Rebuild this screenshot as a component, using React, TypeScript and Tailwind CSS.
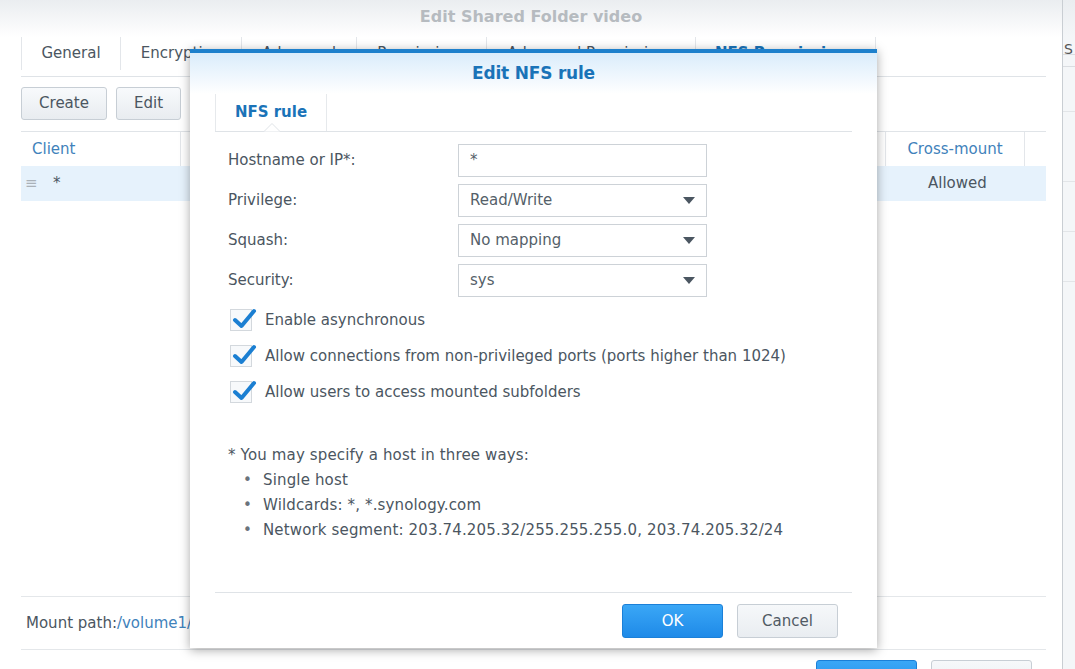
import React from "react";

const Arrow = () => (
  <svg width="12" height="7" viewBox="0 0 12 7" className="shrink-0">
    <path d="M0 0 L12 0 L6 7 Z" fill="#4b5661" />
  </svg>
);

const Check = () => (
  <div className="relative w-[22px] h-[22px] border border-[#d3d8dd] bg-[#f7f9fb] shrink-0">
    <svg width="26" height="24" viewBox="0 0 26 24" className="absolute left-[1px] top-[-3px]">
      <path d="M3 13 L9.5 19 L22 4" fill="none" stroke="#1b7fd2" strokeWidth="4" strokeLinecap="round" strokeLinejoin="round" />
    </svg>
  </div>
);

function Field({ label, value, select }: { label: string; value: string; select?: boolean }) {
  return (
    <div className="flex items-center h-[33px]">
      <div className="w-[230px] text-[#4b5661]">{label}</div>
      <div className="w-[249px] h-[33px] border border-[#cdd2d7] bg-white flex items-center justify-between pl-[11px] pr-[11px] text-[#555f69]">
        <span>{value}</span>
        {select && <Arrow />}
      </div>
    </div>
  );
}

export default function App() {
  const tabs = [
    { t: "General", w: 100 },
    { t: "Encryption", w: 121 },
    { t: "Advanced", w: 115 },
    { t: "Permissions", w: 130 },
    { t: "Advanced Permissions", w: 209 },
    { t: "NFS Permissions", w: 180, active: true },
  ];
  return (
    <div className="relative w-[1075px] h-[669px] overflow-hidden bg-white font-['DejaVu_Sans',sans-serif] text-[15px] text-[#4b5661]">
      <div className="flex h-full">
        {/* background window */}
        <div className="w-[1062px] h-full flex flex-col bg-white shrink-0">
          <div className="h-[37px] shrink-0 bg-gradient-to-b from-[#eaedf0] to-white flex items-center justify-center pb-[4px]">
            <span className="font-bold text-[16px] text-[#b6bbc0]">Edit Shared Folder video</span>
          </div>
          <div className="pl-[21px] pr-[16px] flex flex-col">
            <div className="h-[40px] border-b border-[#dfe3e7] flex items-start">
              {tabs.map((tab, i) => (
                <div
                  key={tab.t}
                  style={{ width: tab.w }}
                  className={
                    "h-[33px] flex items-center justify-center border-r border-[#e3e6ea] " +
                    (i === 0 ? "border-l " : "") +
                    (tab.active ? "font-bold text-[#1a73b8]" : "text-[#4b5661]")
                  }
                >
                  {tab.t}
                </div>
              ))}
            </div>
            <div className="mt-[10px] flex gap-[9px] h-[33px]">
              <div className="w-[86px] h-[33px] rounded-[3px] border border-[#c7ced5] bg-gradient-to-b from-[#f8fafc] to-[#e8ecf0] flex items-center justify-center">Create</div>
              <div className="w-[65px] h-[33px] rounded-[3px] border border-[#c7ced5] bg-gradient-to-b from-[#f8fafc] to-[#e8ecf0] flex items-center justify-center">Edit</div>
            </div>
            <div className="mt-[11px] border-t border-[#e0e4e8] h-[35px] flex items-center text-[#3f82bb]">
              <div className="w-[160px] pl-[11px] h-full flex items-center border-r border-[#e3e6ea]">Client</div>
              <div className="flex-1 h-full" />
              <div className="w-[140px] h-full flex items-center justify-center border-l border-r border-[#e3e6ea]">Cross-mount</div>
              <div className="w-[21px]" />
            </div>
            <div className="h-[35px] bg-[#e6f2fc] flex items-center">
              <span className="pl-[4px] w-[32px] text-[#aab1b8]">≡</span>
              <span className="text-[#4b5661]">*</span>
              <div className="flex-1" />
              <span className="w-[161px] pl-[43px] text-[#4b5661]">Allowed</span>
            </div>
            <div className="h-[395px]" />
            <div className="h-[54px] border-t border-b border-[#e4e7ea] flex items-center pl-[5px]">
              <span>Mount path:</span>
              <span className="text-[#3f82bb]">/volume1/video</span>
            </div>
            <div className="mt-[10px] flex justify-end gap-[14px] pr-[14px]">
              <div className="w-[101px] h-[34px] rounded-[3px] bg-gradient-to-b from-[#3aa7f6] to-[#1e8ae8] border border-[#1b80d8]" />
              <div className="w-[101px] h-[34px] rounded-[3px] bg-gradient-to-b from-[#f6f8fa] to-[#e9edf1] border border-[#c7ced5]" />
            </div>
          </div>
        </div>
        {/* next window sliver */}
        <div className="flex-1 h-full border-l border-[#c9ced3] bg-[#f4f6f8] flex flex-col">
          <div className="h-[37px] bg-gradient-to-b from-[#eaedf0] to-[#f4f6f8]" />
          <div className="h-[18px] border-b border-[#dadde1] pl-[1px] text-[14px] leading-[24px] text-[#555] overflow-hidden">S</div>
          <div className="h-[12px] border-b border-[#dadde1]" />
          <div className="h-[45px] border-b border-[#e2e5e8]" />
          <div className="h-[70px] border-b border-[#e2e5e8]" />
          <div className="h-[50px] border-b border-[#e2e5e8]" />
          <div className="h-[50px] border-b border-[#e2e5e8]" />
        </div>
      </div>

      {/* Dialog */}
      <div className="absolute left-[190px] top-[49px] w-[687px] h-[599px] bg-white border-t-[4px] border-[#1e80cc] shadow-[0_2px_10px_rgba(0,0,0,0.35)] flex flex-col">
        <div className="h-[41px] shrink-0 bg-gradient-to-b from-[#daecfb] to-white flex items-center justify-center pt-[1px]">
          <span className="font-bold text-[17px] text-[#1a73b8] tracking-[-0.2px]">Edit NFS rule</span>
        </div>
        <div className="mx-[25px] flex flex-col flex-1">
          <div className="relative h-[38px] border-b border-[#dfe3e7] flex">
            <div className="w-[112px] h-full border-l border-r border-[#e6e9ec] flex items-center justify-center font-bold text-[#1a73b8]">NFS rule</div>
            <svg width="16" height="9" viewBox="0 0 16 9" className="absolute left-[49px] bottom-[-1px]">
              <path d="M0 8.5 L8 0.5 L16 8.5" fill="white" stroke="#dfe3e7" strokeWidth="1" />
            </svg>
          </div>
          <div className="pl-[13px] pt-[12px] flex flex-col gap-[7px]">
            <Field label="Hostname or IP*:" value="*" />
            <Field label="Privilege:" value="Read/Write" select />
            <Field label="Squash:" value="No mapping" select />
            <Field label="Security:" value="sys" select />
          </div>
          <div className="pl-[15px] mt-[12px] flex flex-col gap-[14px]">
            {[
              "Enable asynchronous",
              "Allow connections from non-privileged ports (ports higher than 1024)",
              "Allow users to access mounted subfolders",
            ].map((t) => (
              <div key={t} className="flex items-center gap-[13px] h-[22px]">
                <Check />
                <span>{t}</span>
              </div>
            ))}
          </div>
          <div className="pl-[13px] mt-[40px] leading-[25px] tracking-[0.15px]">
            <div>* You may specify a host in three ways:</div>
            {[
              "Single host",
              "Wildcards: *, *.synology.com",
              "Network segment: 203.74.205.32/255.255.255.0, 203.74.205.32/24",
            ].map((t) => (
              <div key={t} className="flex">
                <span className="w-[35px] pl-[15px] text-[#6a737c]">•</span>
                <span>{t}</span>
              </div>
            ))}
          </div>
          <div className="flex-1" />
          <div className="h-[56px] border-t border-[#dfe3e7] flex items-start justify-end gap-[14px] pr-[14px] pt-[11px]">
            <div className="w-[101px] h-[34px] rounded-[3px] bg-gradient-to-b from-[#3aa7f6] to-[#1e8ae8] border border-[#1b80d8] flex items-center justify-center text-white">OK</div>
            <div className="w-[101px] h-[34px] rounded-[3px] bg-gradient-to-b from-[#f6f8fa] to-[#e9edf1] border border-[#c7ced5] flex items-center justify-center text-[#505a64]">Cancel</div>
          </div>
        </div>
      </div>
    </div>
  );
}
